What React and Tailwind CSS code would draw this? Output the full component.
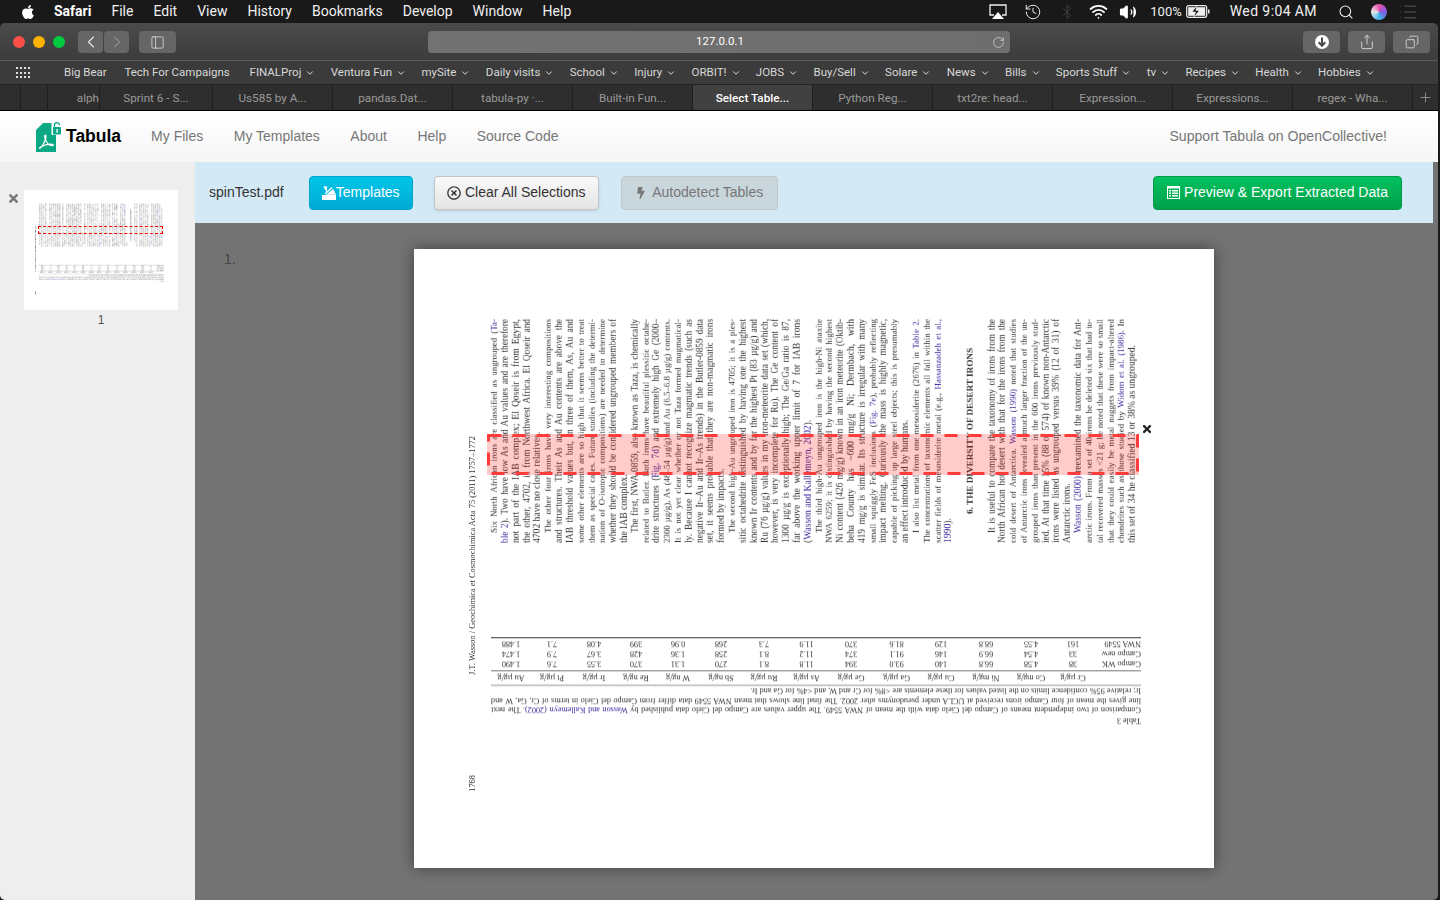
import {
  ChevronDown,
  ChevronLeft,
  ChevronRight,
  Copy,
  History,
  List,
  PanelLeft,
  Plus,
  RotateCw,
  Search,
  Share,
  Volume2,
  Wifi,
  Bluetooth,
} from "lucide-react";
import { FaApple, FaBolt, FaRegTimesCircle, FaTimes } from "react-icons/fa";

const menus = ["File", "Edit", "View", "History", "Bookmarks", "Develop", "Window", "Help"];

const bookmarks = [
  ["Big Bear", false],
  ["Tech For Campaigns", false],
  ["FINALProj", true],
  ["Ventura Fun", true],
  ["mySite", true],
  ["Daily visits", true],
  ["School", true],
  ["Injury", true],
  ["ORBIT!", true],
  ["JOBS", true],
  ["Buy/Sell", true],
  ["Solare", true],
  ["News", true],
  ["Bills", true],
  ["Sports Stuff", true],
  ["tv", true],
  ["Recipes", true],
  ["Health", true],
  ["Hobbies", true],
];

const tabs = [
  "Sprint 6 - S...",
  "Us585 by A...",
  "pandas.Dat...",
  "tabula-py ·...",
  "Built-in Fun...",
  "Select Table...",
  "Python Reg...",
  "txt2re: head...",
  "Expression...",
  "Expressions...",
  "regex - Wha...",
];

// lines of the rotated pdf page, {..} marks a link, > marks an indent, last char ~ means a short line
const pageLines = [
  ">Six North African irons are classified as ungrouped ({Ta-}",
  "{ble 2}). Two have low As and Au values and are therefore",
  "not part of the IAB complex; El Qoseir is from Egypt,",
  "the other, 4702, is from Northwest Africa. El Qoseir and",
  "4702 have no close relatives.~",
  ">The other four irons have very interesting compositions",
  "and structures. Their As and Au contents are above the",
  "IAB threshold values but, in three of them, As, Au and",
  "some other elements are so high that it seems better to treat",
  "them as special cases. Future studies (including the determi-",
  "nation of O-isotopic compositions) are needed to determine",
  "whether they should be considered ungrouped members of",
  "the IAB complex.~",
  ">The first, NWA 0859, also known as Taza, is chemically",
  "related to Butler. Both irons have beautiful plessitic octahe-",
  "drite structures ({Fig. 7d}) and extremely high Ge (2000–",
  "2300 µg/g), As (48–54 µg/g) and Au (6.5–6.8 µg/g) contents.",
  "It is not yet clear whether or not Taza formed magmatical-",
  "ly. Because I cannot recognize magmatic trends (such as",
  "negative Ir–Au and Ir–As trends) in the Butler-0859 data",
  "set, it seems probable that they are non-magmatic irons",
  "formed by impacts.~",
  ">The second high-Au ungrouped iron is 4705; it is a ples-",
  "sitic octahedrite distinguished by having one the highest",
  "known Ir contents and by far the highest Pt (83 µg/g) and",
  "Ru (76 µg/g) values in my iron-meteorite data set (which,",
  "however, is very incomplete for Ru). The Ge content of",
  "1300 µg/g is exceptionally high; The Ge/Ga ratio is 87,",
  "far above the working upper limit of 7 for IAB irons",
  "({Wasson and Kallemeyn, 2002}).~",
  ">The third high-Au ungrouped iron is the high-Ni ataxite",
  "NWA 6259; it is distinguished by having the second highest",
  "Ni content (426 mg/g) known in an iron meteorite (Oktib-",
  "beha County has ~600 mg/g Ni; Dermbach, with",
  "419 mg/g is similar. Its structure is irregular with many",
  "small squiggly FeS inclusions ({Fig. 7e}), probably reflecting",
  "impact melting. Curiously the mass is highly magnetic,",
  "capable of picking up large steel objects; this is presumably",
  "an effect introduced by humans.~",
  ">I also list metal from one mesosiderite (2676) in {Table 2}.",
  "The concentrations of taxonomic elements all fall within the",
  "scatter fields of mesosiderite metal (e.g., {Hassanzadeh et al.,}",
  "{1990}).~",
  "",
  "#6. THE DIVERSITY OF DESERT IRONS",
  "",
  ">It is useful to compare the taxonomy of irons from the",
  "North African hot desert with that for the irons from the",
  "cold desert of Antarctica. {Wasson (1990)} noted that studies",
  "of Antarctic irons revealed a much larger fraction of the un-",
  "grouped irons than present in the 600 irons previously stud-",
  "ied. At that time 15% (88 of 574) of known non-Antarctic",
  "irons were listed as ungrouped versus 39% (12 of 31) of",
  "Antarctic irons.~",
  ">{Wasson (2000)} reexamined the taxonomic data for Ant-",
  "arctic irons. From a set of 40 irons he deleted six that had to-",
  "tal recovered masses <21 g; he noted that these were so small",
  "that they could easily be metal nuggets from impact-altered",
  "chondrites such as those studied by {Widom et al. (1986)}. In",
  "this set of 34 he classified 13 or 38% as ungrouped.~",
];

const tableHead = ["", "Cr µg/g", "Co mg/g", "Ni mg/g", "Cu µg/g", "Ga µg/g", "Ge µg/g", "As µg/g", "Ru µg/g", "Sb ng/g", "W ng/g", "Re ng/g", "Ir µg/g", "Pt µg/g", "Au µg/g"];
const tableRows = [
  ["Campo WK", "38", "4.58", "66.8", "140", "93.0", "394", "11.8", "8.1", "270", "1.31", "370", "3.55", "7.6", "1.490"],
  ["Campo new", "33", "4.54", "66.9", "146", "91.1", "374", "11.2", "8.1", "258", "1.36", "428", "3.67", "7.9", "1.474"],
  ["NWA 5549", "161", "4.55", "68.8", "129", "81.6", "370", "11.9", "7.3", "268", "0.96", "399", "4.08", "7.1", "1.488"],
];

function Linked({ text }) {
  const parts = text.split(/(\{[^}]*\})/).filter(Boolean);
  return parts.map((part, i) =>
    part.startsWith("{") ? (
      <span key={i} className="text-[#3a2a9c]">
        {part.slice(1, -1)}
      </span>
    ) : (
      <span key={i}>{part}</span>
    )
  );
}

// longer lines get a smaller size so that they still fit the 224px column
function lineSize(length) {
  if (length <= 53) return "text-[9.6px]";
  if (length <= 57) return "text-[9.3px]";
  return "text-[8.9px]";
}

function PageLine({ line }) {
  if (line === "") return <div className="h-[224px] w-[10.82px]" />;
  if (line.startsWith("#")) {
    return <div className="h-[224px] w-[10.82px] whitespace-nowrap text-center text-[9.2px] font-bold">{line.slice(1)}</div>;
  }
  const short = line.endsWith("~");
  const indent = line.startsWith(">");
  const text = line.replace(/^>/, "").replace(/~$/, "");
  const length = text.replace(/[{}]/g, "").length + (indent ? 3 : 0);
  return (
    <div
      className={`h-[224px] w-[10.82px] whitespace-nowrap ${lineSize(length)} ${short ? "" : "[text-align:justify] [text-align-last:justify]"} ${indent ? "indent-[10px]" : ""}`}
    >
      <Linked text={text} />
    </div>
  );
}

function PdfPage() {
  return (
    <div className="relative h-[619px] w-[800px] overflow-hidden bg-white font-['Liberation_Serif',serif] text-[#333]">
      <div className="blur-[0.4px]">
        <div className="absolute left-[54px] top-[186px] h-[240px] whitespace-nowrap text-[8.4px] leading-[10px] [writing-mode:vertical-rl] rotate-180">
          J.T. Wasson / Geochimica et Cosmochimica Acta 75 (2011) 1757–1772
        </div>
        <div className="absolute left-[54px] top-[526px] whitespace-nowrap text-[8.4px] leading-[10px] [writing-mode:vertical-rl] rotate-180">
          1768
        </div>

        <div className="absolute left-[75px] top-[70px] flex h-[224px] flex-col flex-wrap-reverse leading-[10.82px] [writing-mode:vertical-rl] rotate-180">
          {pageLines.map((line, i) => (
            <PageLine key={i} line={line} />
          ))}
        </div>

        <div className="absolute left-[77px] top-[388px] w-[650px] rotate-180 text-[8.2px] leading-[9.6px]">
          <div className="mb-[1px]">Table 3</div>
          <p className="[text-align:justify] [text-align-last:justify] whitespace-nowrap">
            <Linked text="Comparison of two independent means of Campo del Cielo data with the mean of NWA 5549. The upper values are Campo del Cielo data published by {Wasson and Kallemeyn (2002)}. The next" />
          </p>
          <p className="[text-align:justify] [text-align-last:justify] whitespace-nowrap">
            line gives the mean of four Campo irons received at UCLA under pseudonyms after 2002. The final line shows that mean NWA 5549 data differ from Campo del Cielo in terms of Cr, Ga, W and
          </p>
          <p className="whitespace-nowrap">
            Ir; relative 95% confidence limits on the listed values for these elements are &lt;8% for Cr and W, and &lt;4% for Ga and Ir.
          </p>
          <div className="h-[2px] bg-[#c9c9c9]" />
          <div className="grid h-[14px] grid-cols-[48px_40px_44px_46px_44px_45px_46px_43px_42px_44px_42px_42px_42px_42px_40px] items-center border-b border-[#777] text-center">
            {tableHead.map((cell, i) => (cell ? <span key={i}>{cell}</span> : <div key={i} />))}
          </div>
          <div className="border-b border-[#666] pb-[1px] pt-[1px]">
            {tableRows.map((row) => (
              <div
                key={row[0]}
                className="grid h-[10px] grid-cols-[48px_40px_44px_46px_44px_45px_46px_43px_42px_44px_42px_42px_42px_42px_40px] items-center text-center"
              >
                {row.map((cell, i) => (
                  <span key={i} className={i === 0 ? "whitespace-nowrap text-left" : ""}>
                    {cell}
                  </span>
                ))}
              </div>
            ))}
          </div>
        </div>
      </div>
    </div>
  );
}

function TabulaLogo() {
  return (
    <svg width="26" height="30" viewBox="0 0 26 30" className="shrink-0">
      <path d="M7 1h10v6h3v23H0V8z" fill="#0aa884" />
      <rect x="15.500" y="0" width="10.500" height="13" rx="1" fill="#fff" />
      <rect x="17" y="5" width="8" height="7.500" rx="1" fill="#0aa884" />
      <path d="M18.500 5V3.200a2.500 2.500 0 0 1 5 0" fill="none" stroke="#0aa884" strokeWidth="1.300" />
      <rect x="20.400" y="7" width="1.300" height="3.800" fill="#fff" />
      <path
        d="M3.500 26.500c2-1 4.500-5 6-9.500 .6-2 .6-4-.2-4-1 0-.8 3 .5 5.500 1.500 3 4 5.200 6.700 5.200 1.200 0 1.200-1.200-.3-1.400-3-.4-7.500 .8-10.500 2.200-1.200 .6-2.800 2-2.200 2z"
        fill="none"
        stroke="#fff"
        strokeWidth="1.200"
      />
    </svg>
  );
}

function MenuBar() {
  return (
    <div className="flex h-[23px] shrink-0 items-center justify-between bg-[#191919] font-['Roboto',sans-serif] text-[14px] text-[#f0f0f0]">
      <div className="flex items-center">
        <FaApple className="ml-[20px] mr-[18px] text-[16px] text-white" />
        <span className="mr-[20px] font-bold text-white">Safari</span>
        <div className="flex gap-[20px]">
          {menus.map((m) => (
            <span key={m}>{m}</span>
          ))}
        </div>
      </div>
      <div className="flex items-center">
        <svg width="18" height="16" viewBox="0 0 18 16" className="mr-[17px]">
          <path d="M5 11H1V1h16v10h-4" fill="none" stroke="#eee" strokeWidth="1.300" />
          <path d="M9 8l6 7H3z" fill="#fff" />
        </svg>
        <History size={18} strokeWidth={1.3} className="mr-[17px] text-[#eee]" />
        <Bluetooth size={16} strokeWidth={1.2} className="mr-[14px] text-[#4a4a4a]" />
        <Wifi size={19} strokeWidth={2.2} className="mr-[11px] text-white" />
        <Volume2 size={18} strokeWidth={1.5} fill="#fff" className="mr-[13px] text-white" />
        <span className="mr-[4px] text-[13px]">100%</span>
        <svg width="24" height="13" viewBox="0 0 24 13" className="mr-[20px]">
          <rect x="0.700" y="0.700" width="20" height="11.600" rx="2" fill="none" stroke="#eee" strokeWidth="1.200" />
          <rect x="2.200" y="2.200" width="17" height="8.600" fill="#eee" />
          <path d="M10.500 1L6 7h3.500L8 12l5.500-6.500H10z" fill="#191919" stroke="#eee" strokeWidth="0.600" />
          <rect x="22" y="4.500" width="1.500" height="4" fill="#eee" />
        </svg>
        <span className="mr-[21px] tracking-[0.4px]">Wed 9:04 AM</span>
        <Search size={16} strokeWidth={1.6} className="mr-[17px] text-[#eee]" />
        <div className="mr-[11px] h-[16px] w-[16px] rounded-full bg-[conic-gradient(#e94fa7,#7c5ce6,#3fb6e8,#e8e8e8,#e94fa7)]" />
        <List size={20} strokeWidth={1.2} className="mr-[22px] text-[#5a5a5a]" />
      </div>
    </div>
  );
}

function ToolButton({ className, children }) {
  return (
    <div className={`flex h-[22px] items-center justify-center rounded-[4px] bg-[#666666] ${className}`}>
      {children}
    </div>
  );
}

function SafariChrome() {
  return (
    <div className="shrink-0 font-['Roboto',sans-serif]">
      <div className="flex h-[38px] items-center border-b border-[#5c5c5c] bg-gradient-to-b from-[#4b4b4b] to-[#3c3c3c] pt-[1px]">
        <div className="ml-[13px] flex gap-[8px]">
          <div className="h-[12px] w-[12px] rounded-full bg-[#fc4f4a]" />
          <div className="h-[12px] w-[12px] rounded-full bg-[#fdb200]" />
          <div className="h-[12px] w-[12px] rounded-full bg-[#00ca3f]" />
        </div>
        <div className="ml-[13px] flex gap-px">
          <ToolButton className="w-[25px] text-[#e8e8e8]">
            <ChevronLeft size={20} strokeWidth={1.300} />
          </ToolButton>
          <ToolButton className="w-[25px] text-[#8c8c8c]">
            <ChevronRight size={20} strokeWidth={1.300} />
          </ToolButton>
        </div>
        <ToolButton className="ml-[10px] w-[37px] text-[#e8e8e8]">
          <PanelLeft size={15} strokeWidth={1.200} />
        </ToolButton>
        <div className="ml-[252px] flex h-[22px] w-[582px] items-center rounded-[4px] bg-gradient-to-r from-[#727272] to-[#6e6e6e] text-[11.500px] text-white">
          <span className="flex-1 pl-[20px] text-center">127.0.0.1</span>
          <RotateCw size={13} strokeWidth={1.300} className="mr-[5px] text-[#e2e2e2]" />
        </div>
        <ToolButton className="ml-[293px] w-[37px] text-[#e8e8e8]">
          <svg width="16" height="16" viewBox="0 0 16 16">
            <circle cx="8" cy="8" r="7" fill="#fff" />
            <path d="M8 3.500v8M4.700 8.200L8 11.800l3.300-3.600" fill="none" stroke="#4a4a4a" strokeWidth="2" />
          </svg>
        </ToolButton>
        <ToolButton className="ml-[8px] w-[37px] text-[#e8e8e8]">
          <Share size={16} strokeWidth={1.200} />
        </ToolButton>
        <ToolButton className="ml-[8px] w-[37px] text-[#e8e8e8]">
          <Copy size={14} strokeWidth={1.300} className="-scale-x-100" />
        </ToolButton>
      </div>

      <div className="flex h-[24px] items-center border-b border-[#232323] bg-[#3b3b3b] pt-[1px] text-[11.500px] text-[#d8d8d8]">
        <div className="ml-[16px] mr-[26px] grid h-[12px] w-[14px] grid-cols-4 gap-[2px]">
          {Array.from({ length: 12 }).map((_, i) => (
            <div key={i} className="h-[2px] w-[2px] bg-[#e0e0e0]" />
          ))}
        </div>
        <div className="ml-[8px] flex gap-[15.360px]">
          {bookmarks.map(([name, arrow], i) => (
            <span
              key={name}
              className={`flex items-center gap-[4px] whitespace-nowrap ${i === 0 ? "mr-[2.400px]" : ""} ${i === 1 ? "mr-[4.500px]" : ""}`}
            >
              {name}
              {arrow && <ChevronDown size={10} strokeWidth={2.400} />}
            </span>
          ))}
        </div>
      </div>

      <div className="flex h-[25px] items-center bg-[#2e2e2e] text-[11.700px] text-[#9a9a9a]">
        <div className="h-full w-[21px] border-r border-[#1e1e1e]" />
        <div className="h-full w-[27px] border-r border-[#1e1e1e]" />
        <div className="flex h-full w-[52px] items-center justify-end overflow-hidden border-r border-[#1e1e1e] pt-[2px]">
          <span className="whitespace-nowrap">alph</span>
        </div>
        <div className="flex h-full w-[113px] items-center justify-center border-r border-[#1e1e1e] pt-[2px]">{tabs[0]}</div>
        {tabs.slice(1).map((tab) => {
          const active = tab === "Select Table...";
          return (
            <div
              key={tab}
              className={`flex h-full w-[120px] items-center justify-center border-r border-[#1e1e1e] pt-[2px] ${active ? "bg-[#414141] font-medium text-white" : ""}`}
            >
              {tab}
            </div>
          );
        })}
        <div className="flex h-full flex-1 items-center justify-center">
          <Plus size={15} strokeWidth={1} className="text-[#bbb]" />
        </div>
      </div>
    </div>
  );
}

function TabulaHeader() {
  return (
    <header className="flex h-[52px] shrink-0 items-center border-t border-black bg-gradient-to-b from-white to-[#f6f6f6] pr-[51px] font-['Liberation_Sans',sans-serif] text-[14px] text-[#777] shadow-[0_1px_3px_rgba(0,0,0,0.12)]">
      <div className="ml-[36px] flex items-center gap-[4px]">
        <TabulaLogo />
        <span className="text-[17.500px] font-bold text-black">Tabula</span>
      </div>
      <nav className="ml-[30px] flex gap-[30.500px]">
        <span>My Files</span>
        <span>My Templates</span>
        <span>About</span>
        <span>Help</span>
        <span>Source Code</span>
      </nav>
      <span className="ml-auto text-[14.100px]">Support Tabula on OpenCollective!</span>
    </header>
  );
}

function Sidebar() {
  return (
    <aside className="relative w-[195px] shrink-0 bg-[#eeeeee] pl-[24px] pt-[28px]">
      <FaTimes className="absolute left-[7px] top-[30px] text-[13px] text-[#777]" />
      <div className="relative h-[120px] w-[154px] overflow-hidden bg-white">
        <div className="origin-top-left scale-[0.1925]">
          <PdfPage />
        </div>
        <div className="absolute left-[14px] top-[36px] h-[8px] w-[125px] border border-dashed border-[#f00]" />
      </div>
      <div className="mt-[1px] w-[154px] text-center text-[12px] leading-[18px] text-[#555]">1</div>
    </aside>
  );
}

function Toolbar() {
  return (
    <div className="flex h-[61px] shrink-0 items-center bg-[#d3eaf6] pl-[14px] pr-[31px] text-[14px]">
      <span className="mr-[25px] text-[#333]">spinTest.pdf</span>
      <button className="flex h-[34px] w-[104px] items-center justify-center rounded-[4px] border border-[#00a5cc] bg-gradient-to-b from-[#00c6e8] to-[#00a9d4] text-white">
        <svg width="14" height="14" viewBox="0 0 14 14" className="shrink-0">
          <path d="M0 9h14v5H0z" fill="#fff" />
          <path d="M3 8L10 1.500M2.500 1l2 .2-.2 3zM6 8l5-4 2 4z" fill="#fff" stroke="#fff" strokeWidth="1.300" />
        </svg>
        <span>Templates</span>
      </button>
      <button className="ml-[21px] flex h-[34px] w-[165px] items-center justify-center gap-[4px] rounded-[4px] border border-[#c4c4c4] bg-gradient-to-b from-[#fafafa] to-[#e4e4e4] text-[#333] shadow-sm">
        <FaRegTimesCircle className="text-[14px]" />
        <span>Clear All Selections</span>
      </button>
      <button className="ml-[22px] flex h-[34px] w-[157px] items-center justify-center gap-[5px] rounded-[4px] border border-[#bdc7cc] bg-[#c9d6dc] text-[#777]">
        <FaBolt className="text-[12px]" />
        <span>Autodetect Tables</span>
      </button>
      <button className="ml-auto flex h-[34px] w-[249px] items-center justify-center gap-[4px] rounded-[4px] border border-[#00984a] bg-gradient-to-b from-[#03c25f] to-[#00a04a] text-white">
        <svg width="13" height="13" viewBox="0 0 13 13" className="shrink-0">
          <rect x="0.500" y="0.500" width="12" height="12" fill="none" stroke="#fff" />
          <path d="M0 0h13v2.500H0zM2 4h2v1.500H2zM5 4h6v1.500H5zM2 6.500h2V8H2zM5 6.500h6V8H5zM2 9h2v1.500H2zM5 9h6v1.500H5z" fill="#fff" />
        </svg>
        <span>Preview &amp; Export Extracted Data</span>
      </button>
    </div>
  );
}

function Selection() {
  return (
    <>
      <svg width="652" height="41" className="absolute left-[73px] top-[185px]">
        <rect x="0" y="0" width="652" height="41" fill="#ff0000" fillOpacity="0.2" />
        <rect x="1.500" y="1.500" width="649" height="38" fill="none" stroke="#ff3b3b" strokeWidth="3" strokeDasharray="13 11" />
      </svg>
      <FaTimes className="absolute left-[727px] top-[174px] text-[12px] text-[#222]" />
    </>
  );
}

export default function App() {
  return (
    <div className="flex h-[900px] w-[1440px] flex-col overflow-hidden bg-[#1a1a1a] font-['Liberation_Sans',sans-serif]">
      <MenuBar />
      <div className="mr-[2px] flex min-h-0 flex-1 flex-col overflow-hidden rounded-b-[5px] rounded-t-[5px]">
        <SafariChrome />
        <TabulaHeader />
        <div className="flex min-h-0 flex-1 font-['Liberation_Sans',sans-serif]">
          <Sidebar />
          <main className="flex min-w-0 flex-1 flex-col bg-[#737373] pr-[5px]">
            <Toolbar />
            <div className="flex min-h-0 flex-1 pl-[29px] pt-[26px]">
              <span className="w-[190px] shrink-0 text-[14px] leading-[20px] text-[#444]">1.</span>
              <div className="relative h-[619px] w-[800px] shadow-[0_0_14px_rgba(0,0,0,0.45)]">
                <PdfPage />
                <Selection />
              </div>
            </div>
          </main>
        </div>
      </div>
    </div>
  );
}
